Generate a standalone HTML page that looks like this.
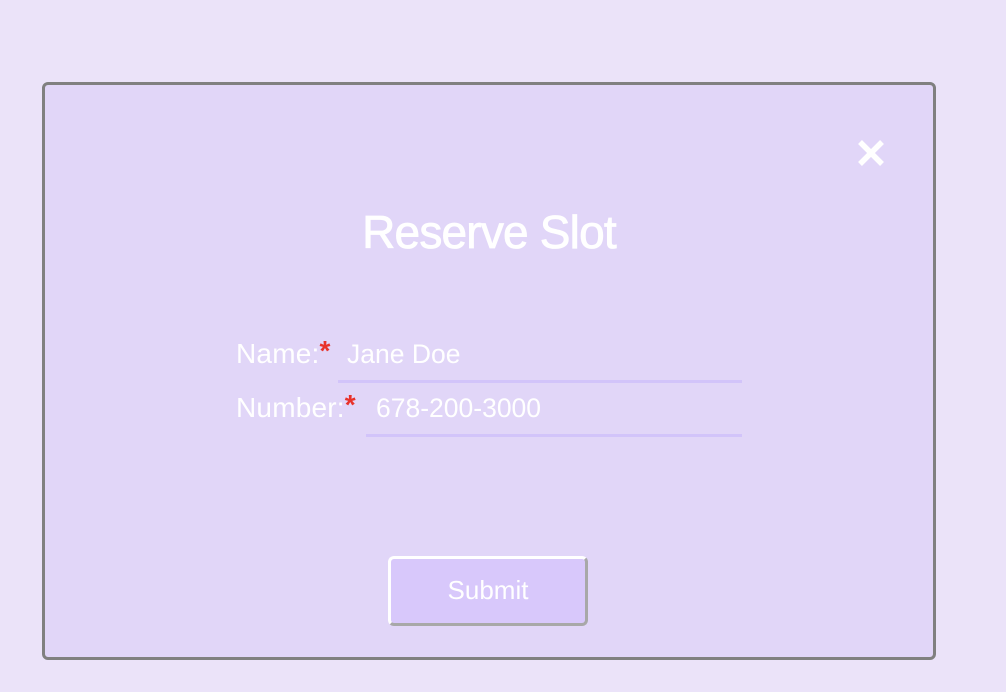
<!DOCTYPE html>
<html><head><style>
body{margin:0;width:1006px;height:692px;background:#ebe3f9;position:relative;overflow:hidden;font-family:"Liberation Sans",sans-serif;}
.modal{position:absolute;left:42px;top:82px;width:888px;height:572px;border:3px solid #808080;border-radius:6px;background:#e1d6f8;}
.t{position:absolute;color:#fff;white-space:nowrap;}
.line{position:absolute;height:3px;background:#d2c4fa;}
.ast{color:#e8322a;font-size:28px;font-weight:bold;position:relative;top:-3px;}
.btn{position:absolute;left:388px;top:556px;width:194px;height:64px;border:3px solid;border-color:#fff #a8a8a8 #a8a8a8 #fff;border-radius:6px;background:#d8c8fb;color:#fff;font-size:26px;text-align:center;line-height:62px;}
</style></head><body>
<div class="modal"></div>
<svg style="position:absolute;left:857px;top:139px" width="28" height="28"><path d="M3 3L25 25M25 3L3 25" stroke="#fff" stroke-width="5.5"/></svg>
<div class="t" style="left:0;width:978px;text-align:center;top:205px;font-size:46px;letter-spacing:-0.8px;-webkit-text-stroke:0.8px #fff">Reserve Slot</div>
<div class="t" style="left:236px;top:338px;font-size:28px;letter-spacing:0.2px">Name:<span class="ast">*</span></div>
<div class="t" style="left:347px;top:339px;font-size:26.5px">Jane Doe</div>
<div class="line" style="left:338px;top:380px;width:404px"></div>
<div class="t" style="left:236px;top:392px;font-size:28px;letter-spacing:0.2px">Number:<span class="ast">*</span></div>
<div class="t" style="left:376px;top:393px;font-size:26.5px">678-200-3000</div>
<div class="line" style="left:366px;top:434px;width:376px"></div>
<div class="btn">Submit</div>
</body></html>
